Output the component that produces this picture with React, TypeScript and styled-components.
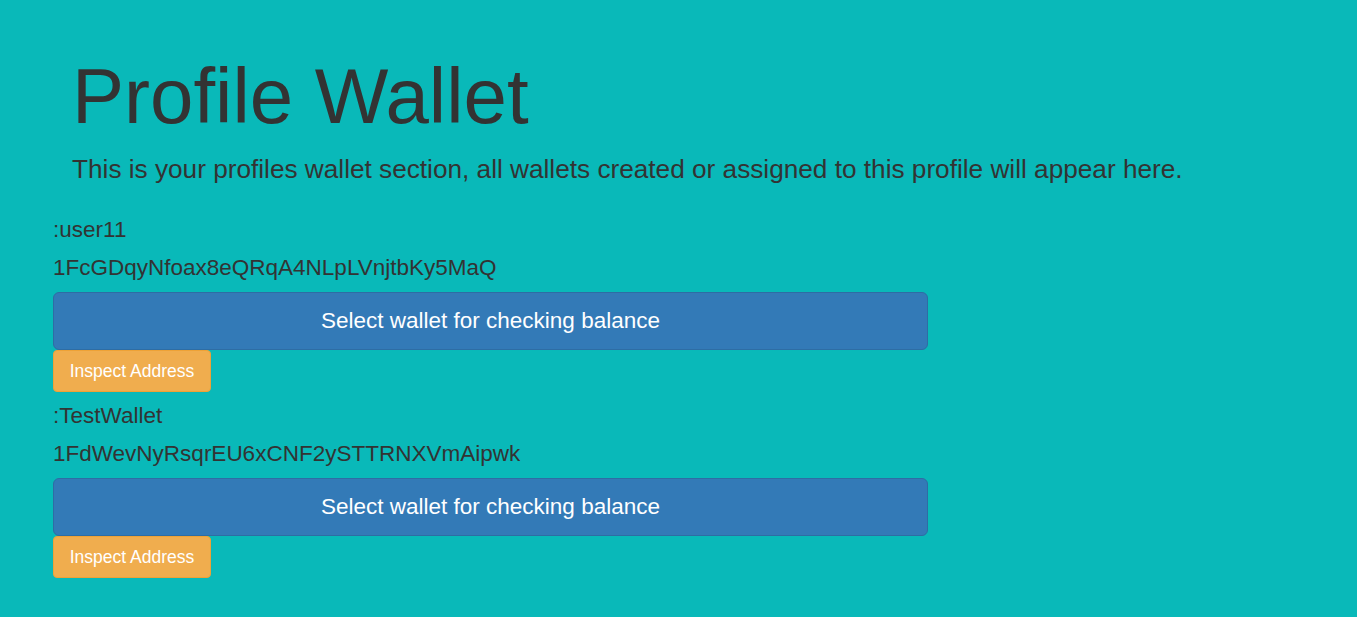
import React from 'react'
import styled, { createGlobalStyle } from 'styled-components'

const GlobalStyle = createGlobalStyle`
  html, body {
    margin: 0;
    padding: 0;
    background-color: #09b9b9;
  }
  body {
    font-family: "Liberation Sans", Arial, sans-serif;
    color: #333;
  }
`

const Page = styled.div`
  min-height: 617px;
  padding: 0 53px;
  box-sizing: border-box;
`

const Header = styled.div`
  padding: 52px 0 0 19px;
`

const Title = styled.h1`
  margin: 0;
  font-size: 78px;
  font-weight: 400;
  line-height: 88px;
`

const Lead = styled.p`
  margin: 12px 0 0;
  font-size: 26.2px;
  line-height: 34px;
`

const WalletList = styled.div`
  margin-top: 30px;
  display: flex;
  flex-direction: column;
`

const WalletItem = styled.div`
  display: flex;
  flex-direction: column;
  margin-bottom: 10px;
`

const Line = styled.div`
  font-size: 22.5px;
  line-height: 28px;
  margin-bottom: 10px;
`

const SelectButton = styled.button`
  width: 875px;
  height: 58px;
  background-color: #337ab7;
  border: 1px solid #2e6da4;
  border-radius: 6px;
  color: #fff;
  font-family: "Liberation Sans", Arial, sans-serif;
  font-size: 22.5px;
  cursor: pointer;
`

const InspectButton = styled.button`
  align-self: flex-start;
  width: 158px;
  height: 42px;
  background-color: #f0ad4e;
  border: 1px solid #eea236;
  border-radius: 4px;
  color: #fff;
  font-family: "Liberation Sans", Arial, sans-serif;
  font-size: 17.5px;
  cursor: pointer;
`

const wallets = [
  { name: 'user11', address: '1FcGDqyNfoax8eQRqA4NLpLVnjtbKy5MaQ' },
  { name: 'TestWallet', address: '1FdWevNyRsqrEU6xCNF2ySTTRNXVmAipwk' }
]

const App: React.FC = () => (
  <>
    <GlobalStyle />
    <Page>
      <Header>
        <Title>Profile Wallet</Title>
        <Lead>
          This is your profiles wallet section, all wallets created or assigned to this profile will appear here.
        </Lead>
      </Header>
      <WalletList>
        {wallets.map(w => (
          <WalletItem key={w.address}>
            <Line>:{w.name}</Line>
            <Line>{w.address}</Line>
            <SelectButton>Select wallet for checking balance</SelectButton>
            <InspectButton>Inspect Address</InspectButton>
          </WalletItem>
        ))}
      </WalletList>
    </Page>
  </>
)

export default App
